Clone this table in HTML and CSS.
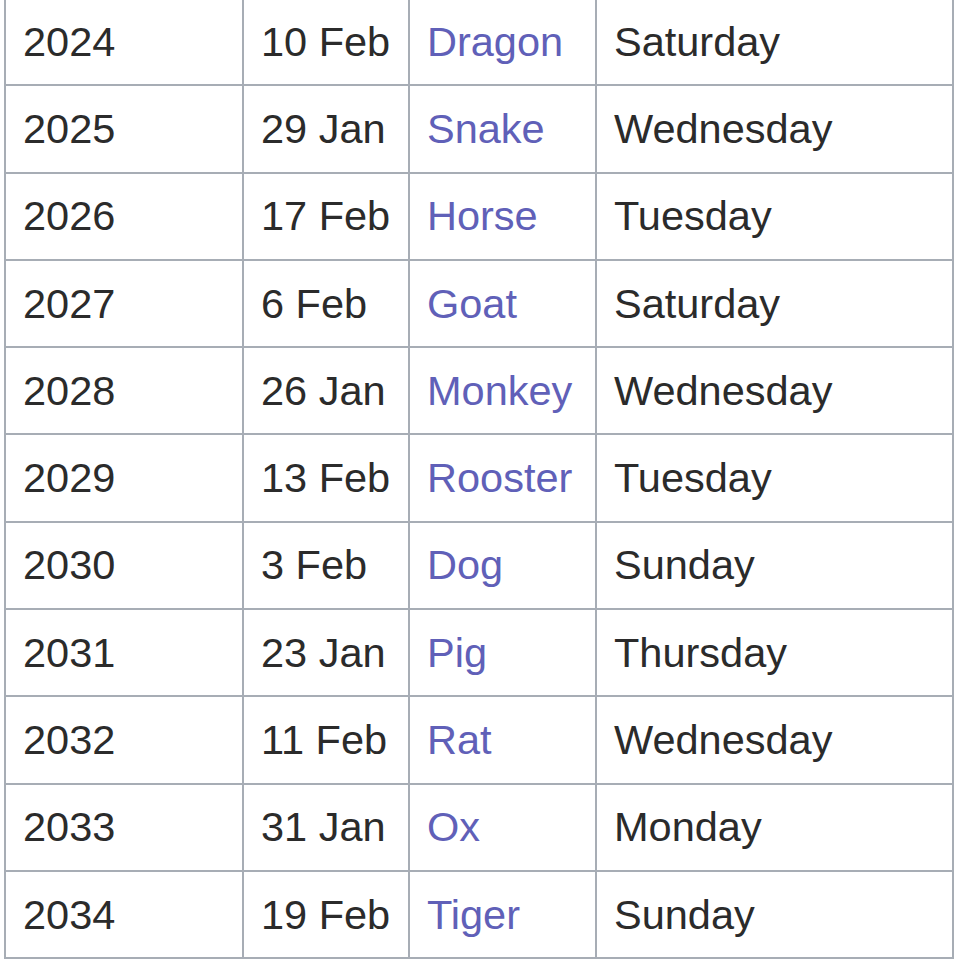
FILE: index.html
```html
<!DOCTYPE html>
<html>
<head>
<meta charset="utf-8">
<link rel="stylesheet" href="styles.css">
</head>
<body>
<table class="years">
  <colgroup>
    <col class="c-year"><col class="c-date"><col class="c-animal"><col class="c-day">
  </colgroup>
  <tbody>
    <tr><td>2024</td><td>10 Feb</td><td><a href="#">Dragon</a></td><td>Saturday</td></tr>
    <tr><td>2025</td><td>29 Jan</td><td><a href="#">Snake</a></td><td>Wednesday</td></tr>
    <tr><td>2026</td><td>17 Feb</td><td><a href="#">Horse</a></td><td>Tuesday</td></tr>
    <tr><td>2027</td><td>6 Feb</td><td><a href="#">Goat</a></td><td>Saturday</td></tr>
    <tr><td>2028</td><td>26 Jan</td><td><a href="#">Monkey</a></td><td>Wednesday</td></tr>
    <tr><td>2029</td><td>13 Feb</td><td><a href="#">Rooster</a></td><td>Tuesday</td></tr>
    <tr><td>2030</td><td>3 Feb</td><td><a href="#">Dog</a></td><td>Sunday</td></tr>
    <tr><td>2031</td><td>23 Jan</td><td><a href="#">Pig</a></td><td>Thursday</td></tr>
    <tr><td>2032</td><td>11 Feb</td><td><a href="#">Rat</a></td><td>Wednesday</td></tr>
    <tr><td>2033</td><td>31 Jan</td><td><a href="#">Ox</a></td><td>Monday</td></tr>
    <tr><td>2034</td><td>19 Feb</td><td><a href="#">Tiger</a></td><td>Sunday</td></tr>
  </tbody>
</table>
</body>
</html>
```
FILE: styles.css
```css
html, body {
  margin: 0;
  padding: 0;
  background: #ffffff;
}
body {
  font-family: "Liberation Sans", Arial, sans-serif;
  color: #2b2b2b;
}
.years {
  border-collapse: collapse;
  table-layout: fixed;
  width: 948px;
  margin: -3px 0 0 4px;
  font-size: 41.5px;
  background: #ffffff;
}
.c-year { width: 238px; }
.c-date { width: 166px; }
.c-animal { width: 187px; }
.c-day { width: 357px; }
.years td {
  border: 2px solid #a7adb5;
  height: 87.3px;
  padding: 0 0 0 17px;
  box-sizing: border-box;
  vertical-align: middle;
  line-height: 46px;
  white-space: nowrap;
}
.years a {
  color: #6060b8;
  text-decoration: none;
}
```
